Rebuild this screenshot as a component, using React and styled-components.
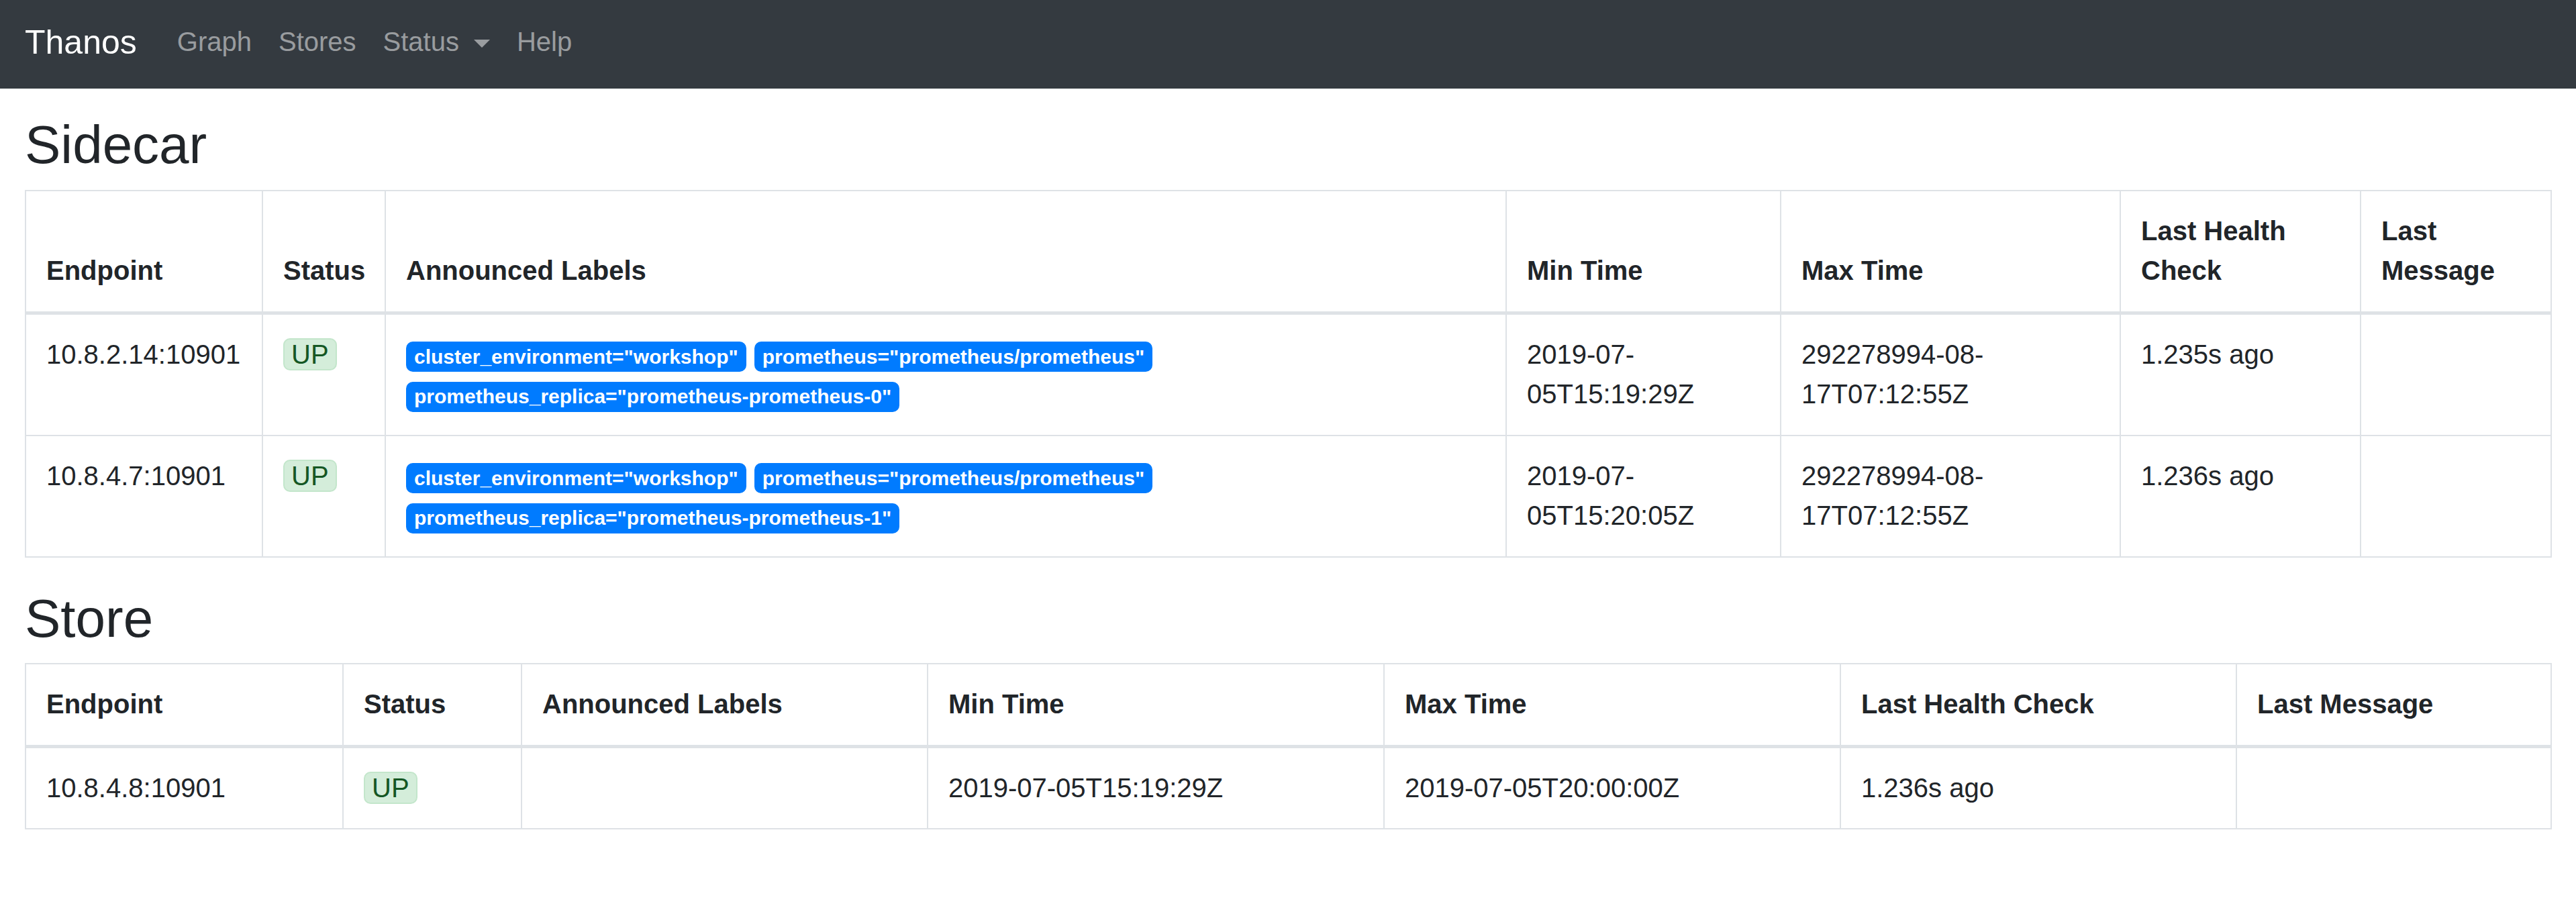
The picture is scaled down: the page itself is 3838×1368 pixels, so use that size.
import React from 'react'
import styled, { createGlobalStyle } from 'styled-components'

const GlobalStyle = createGlobalStyle`
    * {
        box-sizing: border-box;
    }
    body {
        margin: 0;
        background: #fff;
        color: #212529;
        font-family: "Liberation Sans", Arial, sans-serif;
        font-size: 40px;
        line-height: 59.5px;
    }
`

const Navbar = styled.nav`
    display: flex;
    align-items: center;
    height: 132px;
    padding: 0 37px 6px;
    background-color: #343a40;
`

const Brand = styled.a`
    font-size: 50px;
    line-height: 74px;
    color: #fff;
    margin-right: 40px;
    text-decoration: none;
`

const NavLink = styled.a`
    display: flex;
    align-items: center;
    padding: 0 20px;
    color: rgba(255, 255, 255, 0.5);
    text-decoration: none;
    cursor: pointer;
    ${({ caret }) => caret && `
        &::after {
            content: "";
            display: inline-block;
            margin-left: 22px;
            margin-top: 4px;
            border-top: 12px solid;
            border-right: 12px solid transparent;
            border-left: 12px solid transparent;
        }
    `}
`

const Main = styled.main`
    padding: 37px 37px 0;
`

const Heading = styled.h2`
    margin: 0 0 19.6px;
    font-size: 80px;
    line-height: 94px;
    font-weight: 500;
`

const Table = styled.table`
    width: 100%;
    table-layout: fixed;
    border-collapse: collapse;
    margin-bottom: 44px;
`

const HeadCell = styled.th`
    padding: 30px;
    border: 2px solid #dee2e6;
    border-bottom-width: 5px;
    vertical-align: bottom;
    text-align: left;
    font-weight: 700;
`

const Cell = styled.td`
    padding: 30px;
    border: 2px solid #dee2e6;
    vertical-align: top;
`

const LabelBadge = styled.span`
    display: inline-block;
    margin-right: 12px;
    padding: 7.5px 12px;
    border-radius: 10px;
    background-color: #007bff;
    color: #fff;
    font-size: 30px;
    font-weight: 700;
    line-height: 1;
    white-space: nowrap;
`

const StatusBadge = styled.span`
    display: inline-block;
    padding: 2px 10px;
    line-height: 40px;
    border: 2px solid #c3e6cb;
    border-radius: 10px;
    background-color: #d4edda;
    color: #155724;
`

const columns = ['Endpoint', 'Status', 'Announced Labels', 'Min Time', 'Max Time', 'Last Health Check', 'Last Message']

const sections = [
    {
        title: 'Sidecar',
        widths: [353, 183, 1670, 409, 506, 358, 284],
        rows: [
            {
                endpoint: '10.8.2.14:10901',
                labels: ['cluster_environment="workshop"', 'prometheus="prometheus/prometheus"', 'prometheus_replica="prometheus-prometheus-0"'],
                minTime: '2019-07-05T15:19:29Z',
                maxTime: '292278994-08-17T07:12:55Z',
                lastCheck: '1.235s ago',
            },
            {
                endpoint: '10.8.4.7:10901',
                labels: ['cluster_environment="workshop"', 'prometheus="prometheus/prometheus"', 'prometheus_replica="prometheus-prometheus-1"'],
                minTime: '2019-07-05T15:20:05Z',
                maxTime: '292278994-08-17T07:12:55Z',
                lastCheck: '1.236s ago',
            },
        ],
    },
    {
        title: 'Store',
        widths: [473, 266, 605, 680, 680, 590, 469],
        rows: [
            {
                endpoint: '10.8.4.8:10901',
                labels: [],
                minTime: '2019-07-05T15:19:29Z',
                maxTime: '2019-07-05T20:00:00Z',
                lastCheck: '1.236s ago',
            },
        ],
    },
]

function StoreTable({ section }) {
    return (
        <>
            <Heading>{section.title}</Heading>
            <Table>
                <colgroup>
                    {section.widths.map((w, i) => <col key={i} style={{ width: w }} />)}
                </colgroup>
                <thead>
                    <tr>
                        {columns.map(c => <HeadCell key={c}>{c}</HeadCell>)}
                    </tr>
                </thead>
                <tbody>
                    {section.rows.map(row => (
                        <tr key={row.endpoint}>
                            <Cell>{row.endpoint}</Cell>
                            <Cell><StatusBadge>UP</StatusBadge></Cell>
                            <Cell>
                                {row.labels.map(l => <LabelBadge key={l}>{l}</LabelBadge>)}
                            </Cell>
                            <Cell>{row.minTime}</Cell>
                            <Cell>{row.maxTime}</Cell>
                            <Cell>{row.lastCheck}</Cell>
                            <Cell></Cell>
                        </tr>
                    ))}
                </tbody>
            </Table>
        </>
    )
}

export default function App() {
    return (
        <>
            <GlobalStyle />
            <Navbar>
                <Brand>Thanos</Brand>
                <NavLink>Graph</NavLink>
                <NavLink>Stores</NavLink>
                <NavLink caret>Status</NavLink>
                <NavLink>Help</NavLink>
            </Navbar>
            <Main>
                {sections.map(s => <StoreTable key={s.title} section={s} />)}
            </Main>
        </>
    )
}
